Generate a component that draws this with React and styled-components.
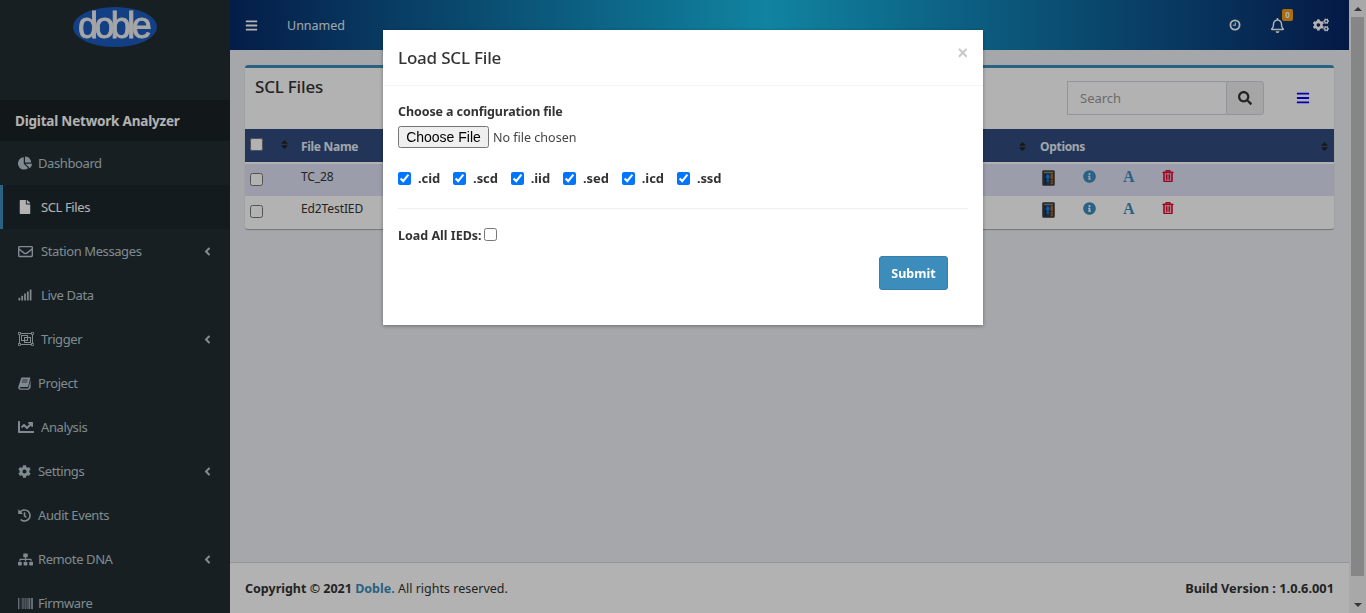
import React from "react";
import styled, { createGlobalStyle } from "styled-components";
import {
  FaAngleLeft,
  FaBarcode,
  FaBars,
  FaChartLine,
  FaChartPie,
  FaCog,
  FaCogs,
  FaFile,
  FaHistory,
  FaInfoCircle,
  FaRegBell,
  FaRegEnvelope,
  FaRegTrashAlt,
  FaSearch,
  FaSignal,
  FaSitemap,
  FaSort,
} from "react-icons/fa";

const FONT = '"Noto Sans", "Open Sans", Arial, sans-serif';

const GlobalStyle = createGlobalStyle`
  html, body {
    margin: 0;
    padding: 0;
    height: 100%;
    overflow: hidden;
    font-family: ${FONT};
    font-size: 13px;
    color: #333;
  }
  * { box-sizing: border-box; }
`;

const Shell = styled.div`
  display: flex;
  width: 1366px;
  height: 613px;
  overflow: hidden;
  background: #ecf0f5;
`;

const Sidebar = styled.aside`
  width: 230px;
  flex: none;
  background: #222d32;
  color: #b8c7ce;
  overflow: hidden;
`;

const LogoBar = styled.div`
  height: 100px;
  display: flex;
  justify-content: center;
  padding-top: 6px;
`;

const AppName = styled.div`
  height: 41px;
  background: #1a2226;
  color: #fff;
  font-weight: 700;
  font-size: 13.5px;
  letter-spacing: -0.2px;
  display: flex;
  align-items: center;
  padding-left: 15px;
`;

const MenuItem = styled.div`
  height: 44px;
  flex: none;
  display: flex;
  align-items: center;
  padding: 0 16px 0 ${(p) => (p.$active ? "15px" : "18px")};
  border-left: ${(p) => (p.$active ? "3px solid #3c8dbc" : "none")};
  background: ${(p) => (p.$active ? "#1e282c" : "transparent")};
  color: ${(p) => (p.$active ? "#fff" : "#b8c7ce")};
  font-size: 13px;
  letter-spacing: -0.4px;
`;

const IconSlot = styled.span`
  width: ${(p) => (p.$wide ? "23px" : "20px")};
  flex: none;
  display: flex;
  align-items: center;
  font-size: ${(p) => p.$size || 14}px;
`;

const Chevron = styled(FaAngleLeft)`
  margin-left: auto;
  font-size: 13px;
`;

const Main = styled.div`
  flex: 1;
  min-width: 0;
  display: flex;
  flex-direction: column;
`;

const TopBar = styled.header`
  height: 50px;
  flex: none;
  display: flex;
  align-items: center;
  padding: 0 20px 0 15px;
  color: #fff;
  background: linear-gradient(to right, #072a68, #18bde6 48%, #072464);
`;

const Project = styled.span`
  margin-left: 29px;
  font-size: 12.5px;
  color: #e6eef2;
`;

const TopIcons = styled.div`
  margin-left: auto;
  display: flex;
  align-items: center;
`;

const TopIcon = styled.span`
  position: relative;
  display: flex;
  font-size: ${(p) => p.$size}px;
  margin-left: ${(p) => p.$gap}px;
`;

const Badge = styled.span`
  position: absolute;
  top: -9px;
  right: -8px;
  width: 11px;
  height: 12px;
  border-radius: 2px;
  background: #f39c12;
  color: #fff;
  font-size: 8px;
  font-weight: 700;
  line-height: 12px;
  text-align: center;
`;

const Content = styled.main`
  flex: 1;
  padding: 15px;
`;

const Box = styled.section`
  background: #fff;
  border-top: 3px solid #3c8dbc;
  border-radius: 3px;
  box-shadow: 0 1px 1px rgba(0, 0, 0, 0.3);
  padding-bottom: 1px;
`;

const BoxHead = styled.div`
  height: 61px;
  display: flex;
  align-items: flex-start;
  padding: 0 24px 0 10px;
`;

const BoxTitle = styled.h3`
  margin: 7px 0 0;
  font-size: 17px;
  font-weight: 500;
  letter-spacing: -0.2px;
`;

const SearchGroup = styled.div`
  margin: 13px 0 0 auto;
  display: flex;
  height: 34px;
`;

const SearchInput = styled.input`
  width: 159px;
  height: 34px;
  padding: 0 12px;
  border: 1px solid #d2d6de;
  border-right: none;
  background: #fff;
  font: 13px ${FONT};
  &::placeholder { color: #999; }
`;

const SearchButton = styled.button`
  width: 38px;
  height: 34px;
  padding: 0;
  border: 1px solid #d2d6de;
  border-radius: 0 3px 3px 0;
  background: #eee;
  color: #333;
  font-size: 14px;
  display: flex;
  align-items: center;
  justify-content: center;
`;

const ListToggle = styled.span`
  margin: 23px 0 0 32px;
  display: flex;
  font-size: 14px;
  color: #0000ff;
`;

const Table = styled.table`
  width: 100%;
  border-collapse: collapse;
  table-layout: fixed;
`;

const HeadCell = styled.th`
  height: 34px;
  padding: 2px 8px 0;
  background: #314c80;
  border-bottom: 2px solid #fff;
  color: #e6eef5;
  font-size: 12px;
  font-weight: 700;
  letter-spacing: -0.3px;
  text-align: left;
  width: ${(p) => p.$width || "auto"};
`;

const CheckHeadCell = styled(HeadCell)`
  padding: 0 3px 2px 5px;
`;

const HeadInner = styled.span`
  display: flex;
  align-items: center;
  justify-content: space-between;
`;

const SortMark = styled(FaSort)`
  font-size: 11px;
  color: #222;
  margin-right: ${(p) => (p.$tight ? "-4px" : "0")};
`;

const Row = styled.tr`
  background: ${(p) => (p.$odd ? "#dee1f5" : "#fff")};
`;

const Cell = styled.td`
  height: 32.5px;
  padding: 4px 8px 0;
  vertical-align: top;
  font-size: 12px;
  letter-spacing: -0.1px;
  color: #333;
`;

const CheckCell = styled(Cell)`
  padding: 9px 0 0 5px;
`;

const RowCheck = styled.input`
  display: block;
  width: 13px;
  height: 13px;
  margin: 0;
`;

const Options = styled.div`
  display: flex;
  align-items: flex-start;
  margin: 2px 0 0 2px;
`;

const OptionIcon = styled.span`
  width: ${(p) => p.$width || 40}px;
  flex: none;
  display: flex;
  font-size: 13px;
  color: ${(p) => p.$color};
`;

const FontGlyph = styled.span`
  font: 700 16px/14px "Liberation Serif", serif;
`;

const TrashIcon = styled(FaRegTrashAlt)`
  font-size: 12px;
  stroke: currentColor;
  stroke-width: 24px;
`;

const Footer = styled.footer`
  height: 51px;
  flex: none;
  display: flex;
  align-items: center;
  justify-content: space-between;
  padding: 0 15px;
  background: #fff;
  border-top: 1px solid #d2d6de;
  font-size: 12.5px;
`;

const BuildVersion = styled.strong`
  font-size: 12.8px;
`;

const DobleLink = styled.a`
  color: #3c8dbc;
  font-weight: 700;
`;

const ScrollTrack = styled.div`
  width: 17px;
  flex: none;
  display: flex;
  flex-direction: column;
  align-items: center;
  background: #f1f1f1;
`;

const ScrollArrow = styled.div`
  height: 17px;
  flex: none;
  display: flex;
  align-items: center;
  justify-content: center;
  &::before {
    content: "";
    border-left: 4px solid transparent;
    border-right: 4px solid transparent;
    ${(p) => (p.$down ? "border-top" : "border-bottom")}: 4px solid #505050;
  }
`;

const ScrollThumb = styled.div`
  width: 13px;
  flex: 1;
  margin-bottom: 20px;
  background: #c1c1c1;
`;

const Backdrop = styled.div`
  position: fixed;
  inset: 0;
  display: flex;
  justify-content: center;
  align-items: flex-start;
  background: rgba(0, 0, 0, 0.3);
`;

const Modal = styled.div`
  width: 600px;
  margin-top: 30px;
  background: #fff;
  box-shadow: 0 1px 4px rgba(0, 0, 0, 0.35);
`;

const ModalHead = styled.div`
  height: 56px;
  display: flex;
  align-items: center;
  justify-content: space-between;
  padding: 0 15px;
  border-bottom: 1px solid #f4f4f4;
`;

const ModalTitle = styled.h4`
  margin: 0;
  font-size: 17px;
  font-weight: 500;
  letter-spacing: -0.2px;
  color: #333;
`;

const Close = styled.span`
  margin: -8px 0 0;
  font: 700 18px "Liberation Sans", sans-serif;
  color: #c8c8c8;
`;

const ModalBody = styled.div`
  padding: 16px 15px 35px;
`;

const FieldLabel = styled.label`
  display: block;
  font-size: 12.5px;
  font-weight: 700;
  letter-spacing: -0.1px;
  line-height: 20px;
`;

const FileInput = styled.input`
  display: block;
  margin-top: 4px;
  height: 23px;
  font: 12.5px ${FONT};
  color: #444;
  &::file-selector-button {
    font: 14px "Liberation Sans", sans-serif;
    height: 22px;
    width: 91px;
    margin-right: 4px;
  }
`;

const TypeRow = styled.div`
  display: flex;
  align-items: center;
  margin-top: 20px;
`;

const TypeCheck = styled.input`
  width: 13px;
  height: 13px;
  margin: 0 7px 0 0;
`;

const TypeLabel = styled.span`
  margin-right: 13px;
  font-size: 13px;
  font-weight: 700;
  letter-spacing: -0.1px;
`;

const Divider = styled.hr`
  margin: 21px 0 0;
  border: none;
  border-top: 1px solid #eee;
`;

const AllRow = styled.div`
  display: flex;
  align-items: center;
  margin-top: 18px;
  font-size: 12.5px;
  font-weight: 700;
`;

const AllCheck = styled.input`
  width: 13px;
  height: 13px;
  margin: -2px 0 0 2px;
`;

const SubmitRow = styled.div`
  display: flex;
  justify-content: flex-end;
  margin-top: 12px;
  padding-right: 20px;
`;

const Submit = styled.button`
  width: 69px;
  height: 34px;
  padding: 0;
  border: 1px solid #367fa9;
  border-radius: 3px;
  background: #3c8dbc;
  color: #fff;
  font: 700 12.5px ${FONT};
`;

const TriggerIcon = () => (
  <svg width="16" height="14" viewBox="0 0 16 14" fill="none" stroke="currentColor">
    <rect x="1.5" y="1.5" width="13" height="11" strokeWidth="1" />
    <rect x="0.5" y="0.5" width="2" height="2" strokeWidth="0.8" fill="#222d32" />
    <rect x="13.5" y="0.5" width="2" height="2" strokeWidth="0.8" fill="#222d32" />
    <rect x="0.5" y="11.5" width="2" height="2" strokeWidth="0.8" fill="#222d32" />
    <rect x="13.5" y="11.5" width="2" height="2" strokeWidth="0.8" fill="#222d32" />
    <rect x="3.5" y="3.5" width="6" height="5" strokeWidth="1" />
    <rect x="6.5" y="5.5" width="6" height="5" strokeWidth="1" />
  </svg>
);

const BookIcon = () => (
  <svg width="13" height="13" viewBox="0 0 13 13" fill="currentColor">
    <path d="M3.4 0.5 H12.4 L10 10 H2.6 C1.6 10 1.5 11.5 2.5 11.5 H10.4 L12.6 3 V10.4 L10.9 12.8 H2.3 C0.6 12.8 0 11.4 0.4 9.6 Z" />
    <path d="M4.3 3 H9.6 M3.8 5 H9.1" stroke="#222d32" strokeWidth="0.8" />
  </svg>
);

const ClockIcon = () => (
  <svg width="12" height="12" viewBox="0 0 12 12" fill="none" stroke="currentColor">
    <circle cx="6" cy="6" r="4.6" strokeWidth="1.8" />
    <path d="M6.3 3.4 V6.3 H3.8" strokeWidth="1.1" />
  </svg>
);

const menu = [
  { label: "Dashboard", icon: FaChartPie },
  { label: "SCL Files", icon: FaFile, wide: true, active: true },
  { label: "Station Messages", icon: FaRegEnvelope, wide: true, size: 15, sub: true },
  { label: "Live Data", icon: FaSignal, wide: true },
  { label: "Trigger", icon: TriggerIcon, wide: true, sub: true },
  { label: "Project", icon: BookIcon },
  { label: "Analysis", icon: FaChartLine, wide: true, size: 16 },
  { label: "Settings", icon: FaCog, size: 13, sub: true },
  { label: "Audit Events", icon: FaHistory, size: 13 },
  { label: "Remote DNA", icon: FaSitemap, size: 15, sub: true },
  { label: "Firmware", icon: FaBarcode, size: 15 },
];

const fileTypes = [".cid", ".scd", ".iid", ".sed", ".icd", ".ssd"];

const DobleLogo = () => (
  <svg width="88" height="44" viewBox="0 0 88 44">
    <defs>
      <filter id="soft">
        <feGaussianBlur stdDeviation="0.45" />
      </filter>
    </defs>
    <ellipse cx="44" cy="21" rx="42" ry="20" fill="#1c5cbf" />
    <text
      x="7"
      y="32"
      fontFamily="Liberation Sans, sans-serif"
      fontSize="36"
      letterSpacing="-3.6"
      fill="#eeeeee"
      stroke="#eeeeee"
      strokeWidth="0.8"
      filter="url(#soft)"
    >
      doble
    </text>
  </svg>
);

const ImportIcon = () => (
  <svg width="13" height="16" viewBox="0 0 13 16">
    <rect x="0.5" y="0.5" width="12" height="15" rx="1" fill="#3a3a3a" stroke="#666" />
    <rect x="2" y="1.8" width="9" height="1.4" fill="#8a8a8a" />
    <rect x="2" y="3.6" width="9" height="10.6" fill="#1c3f66" />
    <rect x="8.6" y="3.6" width="2.4" height="10.6" fill="#b5651d" />
    <path d="M5.8 3.8 L8.4 7.2 H6.9 V12.5 H4.7 V7.2 H3.2 Z" fill="#1a86e8" />
    <path d="M2 9.5 H11 M2 12 H11 M3.4 4 V14" stroke="#222" strokeWidth="0.5" />
  </svg>
);

const rows = ["TC_28", "Ed2TestIED"];

export default function App() {
  return (
    <>
      <GlobalStyle />
      <Shell>
        <Sidebar>
          <LogoBar>
            <DobleLogo />
          </LogoBar>
          <AppName>Digital Network Analyzer</AppName>
          {menu.map(({ label, icon: Icon, wide, size, active, sub }) => (
            <MenuItem key={label} $active={active}>
              <IconSlot $wide={wide} $size={size}>
                <Icon />
              </IconSlot>
              {label}
              {sub && <Chevron />}
            </MenuItem>
          ))}
        </Sidebar>

        <Main>
          <TopBar>
            <FaBars size={13} />
            <Project>Unnamed</Project>
            <TopIcons>
              <TopIcon $size={12} $gap={0}>
                <ClockIcon />
              </TopIcon>
              <TopIcon $size={15} $gap={29}>
                <FaRegBell />
                <Badge>0</Badge>
              </TopIcon>
              <TopIcon $size={16} $gap={28}>
                <FaCogs />
              </TopIcon>
            </TopIcons>
          </TopBar>

          <Content>
            <Box>
              <BoxHead>
                <BoxTitle>SCL Files</BoxTitle>
                <SearchGroup>
                  <SearchInput placeholder="Search" />
                  <SearchButton>
                    <FaSearch />
                  </SearchButton>
                </SearchGroup>
                <ListToggle>
                  <FaBars />
                </ListToggle>
              </BoxHead>
              <Table>
                <thead>
                  <tr>
                    <CheckHeadCell $width="48px">
                      <HeadInner>
                        <RowCheck type="checkbox" />
                        <SortMark />
                      </HeadInner>
                    </CheckHeadCell>
                    <HeadCell>
                      <HeadInner>
                        File Name
                        <SortMark $tight />
                      </HeadInner>
                    </HeadCell>
                    <HeadCell $width="302px">
                      <HeadInner>
                        Options
                        <SortMark $tight />
                      </HeadInner>
                    </HeadCell>
                  </tr>
                </thead>
                <tbody>
                  {rows.map((name, i) => (
                    <Row key={name} $odd={i === 0}>
                      <CheckCell>
                        <RowCheck type="checkbox" />
                      </CheckCell>
                      <Cell>{name}</Cell>
                      <Cell>
                        <Options>
                          <OptionIcon $width={41}>
                            <ImportIcon />
                          </OptionIcon>
                          <OptionIcon $color="#3c8dbc">
                            <FaInfoCircle />
                          </OptionIcon>
                          <OptionIcon $color="#3c8dbc" $width={39}>
                            <FontGlyph>A</FontGlyph>
                          </OptionIcon>
                          <OptionIcon $color="#e4002b">
                            <TrashIcon />
                          </OptionIcon>
                        </Options>
                      </Cell>
                    </Row>
                  ))}
                </tbody>
              </Table>
            </Box>
          </Content>

          <Footer>
            <span>
              <strong>Copyright © 2021 </strong>
              <DobleLink>Doble.</DobleLink> All rights reserved.
            </span>
            <BuildVersion>Build Version : 1.0.6.001</BuildVersion>
          </Footer>
        </Main>

        <ScrollTrack>
          <ScrollArrow />
          <ScrollThumb />
          <ScrollArrow $down />
        </ScrollTrack>
      </Shell>

      <Backdrop>
        <Modal>
          <ModalHead>
            <ModalTitle>Load SCL File</ModalTitle>
            <Close>×</Close>
          </ModalHead>
          <ModalBody>
            <FieldLabel>Choose a configuration file</FieldLabel>
            <FileInput type="file" />
            <TypeRow>
              {fileTypes.map((t) => (
                <React.Fragment key={t}>
                  <TypeCheck type="checkbox" defaultChecked />
                  <TypeLabel>{t}</TypeLabel>
                </React.Fragment>
              ))}
            </TypeRow>
            <Divider />
            <AllRow>
              Load All IEDs:
              <AllCheck type="checkbox" />
            </AllRow>
            <SubmitRow>
              <Submit>Submit</Submit>
            </SubmitRow>
          </ModalBody>
        </Modal>
      </Backdrop>
    </>
  );
}
